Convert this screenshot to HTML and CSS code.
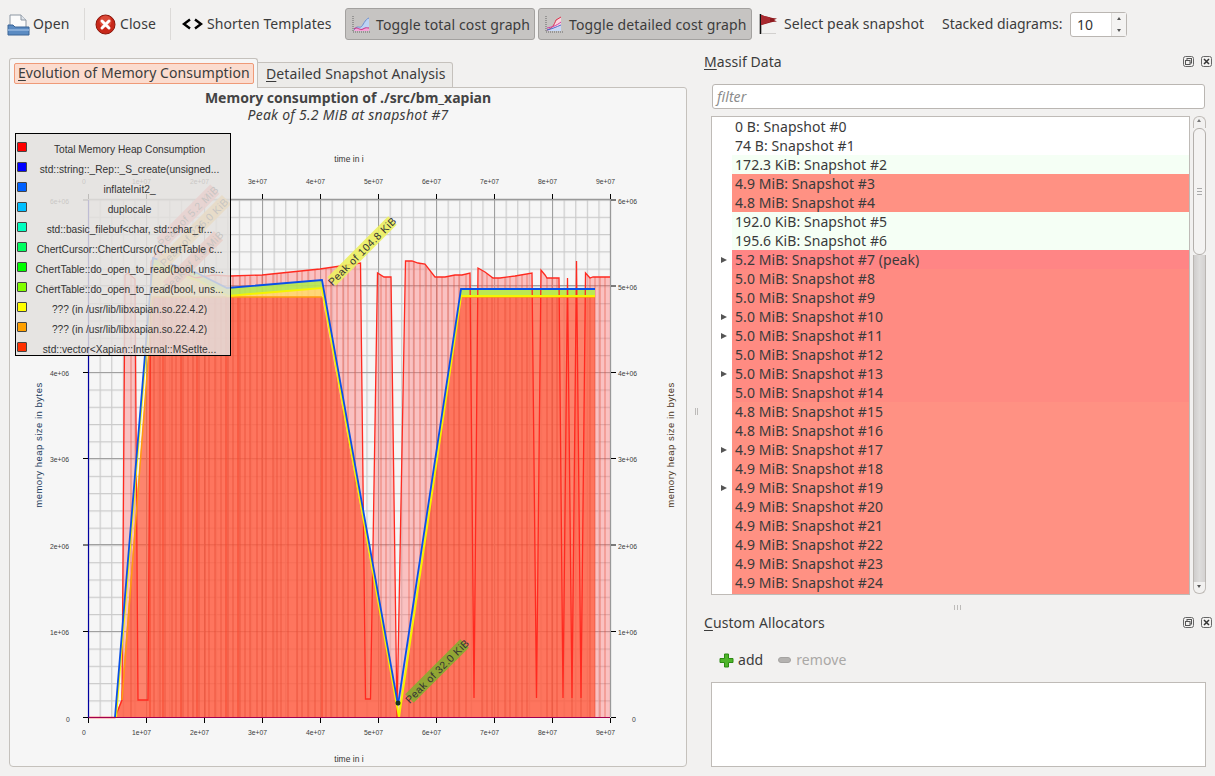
FILE: index.html
```html
<!DOCTYPE html>
<html lang="en">
<head>
<meta charset="utf-8">
<title>Massif Visualizer</title>
<link rel="stylesheet" href="styles.css">
</head>
<body>
<div class="toolbar">
  <div class="tool tool-open">
    <svg class="ico" width="23" height="23" viewBox="0 0 23 23"><path d="M3 2h11l5 5v8H3z" fill="#fbfbfb" stroke="#8d97a3"/><path d="M14 2v5h5" fill="#dfe4ea" stroke="#8d97a3"/><path d="M1 12h5l2 2h14v8H1z" fill="#5b8bc2" stroke="#3a6496"/><path d="M1 16h21v2H1z" fill="#86acd8"/></svg>
    <span>Open</span>
  </div>
  <div class="sep"></div>
  <div class="tool tool-close">
    <svg class="ico" width="21" height="21" viewBox="0 0 21 21"><circle cx="10.5" cy="10.5" r="9.5" fill="#c8281a" stroke="#8a1408"/><circle cx="10.5" cy="7.5" r="6" fill="#e8604c" opacity=".6"/><path d="M7 7l7 7M14 7l-7 7" stroke="#fff" stroke-width="3" stroke-linecap="round"/></svg>
    <span>Close</span>
  </div>
  <div class="sep"></div>
  <div class="tool tool-tpl">
    <svg class="ico" width="21" height="12" viewBox="0 0 21 12"><path d="M8 1.5L2 6l6 4.5M13 1.5L19 6l-6 4.5" fill="none" stroke="#000" stroke-width="2.4"/></svg>
    <span>Shorten Templates</span>
  </div>
  <div class="tool tool-check tool-total">
    <svg class="ico" width="20" height="20" viewBox="0 0 20 20"><path d="M3 17C6 11 8 14 10 13S14 5 18 4V17z" fill="#bcd3f4"/><path d="M3 17C6 12 9 16 12 15s3-1 6-1v3z" fill="#f6a5d8"/><path d="M3 16C6 11 8 14 10 13S14 5 18 4" fill="none" stroke="#6c8fd0"/><path d="M3 15c3-3 6 2 9 0s4-1 6-1" fill="none" stroke="#d0287c"/><path d="M2 2v16h17" fill="none" stroke="#666" stroke-dasharray="1 1"/></svg>
    <span>Toggle total cost graph</span>
  </div>
  <div class="tool tool-check tool-detail">
    <svg class="ico" width="20" height="20" viewBox="0 0 20 20"><path d="M3 17C8 16 10 12 12 7l5-4v14z" fill="#fbd3dc"/><path d="M3 17c5-1 9-3 14-5v5z" fill="#c7d9f8"/><path d="M3 16C8 15 10 11 12 6l5-3" fill="none" stroke="#e0304c"/><path d="M3 16c5-1 9-3 14-5" fill="none" stroke="#3f6fd8"/><path d="M3 14c5-1 9-2 14-6" fill="none" stroke="#d040a0"/><path d="M2 2v16h17" fill="none" stroke="#666" stroke-dasharray="1 1"/></svg>
    <span>Toggle detailed cost graph</span>
  </div>
  <div class="tool tool-flag">
    <svg class="ico" width="21" height="22" viewBox="0 0 21 22"><path d="M1.5 1v20" stroke="#111" stroke-width="1.6"/><path d="M2 2C7 3 11 5 18 5.500L15 7l3 1.500C11 9 7 11 2 12z" fill="#8e1a1e"/><path d="M2 2C6 3 8 4 11 4.500V9C8 9.500 6 11 2 12z" fill="#a92a30"/><path d="M3 20.500h14" stroke="#d2d0ce" stroke-width="1"/></svg>
    <span>Select peak snapshot</span>
  </div>
  <div class="tool tool-stack"><span>Stacked diagrams:</span></div>
  <div class="spin">
    <span class="spin-val">10</span>
    <span class="spin-btns"><i class="up"></i><i class="down"></i></span>
  </div>
</div>

<div class="main">
  <div class="left">
    <div class="tabs">
      <div class="tab tab-on"><span class="tab-focus"><u>E</u>volution of Memory Consumption</span></div>
      <div class="tab tab-off"><span><u>D</u>etailed Snapshot Analysis</span></div>
    </div>
    <div class="panel">
      <div class="titles">
        <div class="title">Memory consumption of ./src/bm_xapian</div>
        <div class="subtitle">Peak of 5.2 MiB at snapshot #7</div>
      </div>
      <svg class="chart" width="676" height="641" viewBox="10 125 676 641">
        <defs>
          <pattern id="gv" patternUnits="userSpaceOnUse" x="88" y="0" width="11.6" height="20"><rect width="1.2" height="20" fill="#cbcbcb"/></pattern>
          <pattern id="gh" patternUnits="userSpaceOnUse" x="0" y="199.5" width="20" height="17.27"><rect width="20" height="1.2" fill="#cbcbcb"/></pattern>
          <clipPath id="ct"><path d="M88 717.500H115L122 700L125 275L128 273L135 279L138 700H148L151 262L158 250L175 268L195 278L213 275L230 276L262 275L320 269L360.500 263L365.500 699H370.500L377.500 273L384 277L391 277L397 717L405.500 261L412 261L418 263L425 264L435 277L445 277L455 275L462 275L470 273L474 698L478 268L485 272L493 278L500 278L515 276L532 273L536.500 698L541 270L545 275L547 278L559 278L563 698L567.500 278L572 698L576.500 261L581 698L585.500 273L590 278L593 277L610 277V717.500z"/></clipPath>
        </defs>

        <g class="grid">
          <rect x="88" y="199.500" width="523" height="518" fill="url(#gv)"/>
          <rect x="88" y="199.500" width="523" height="518" fill="url(#gh)"/>
          <path class="major" d="M146.500 200V717M204.500 200V717M262.500 200V717M320.500 200V717M378.500 200V717M436.500 200V717M494.500 200V717M552.500 200V717M88 285.500H611M88 372.500H611M88 458.500H611M88 544.500H611M88 631.500H611"/>
          <path class="frame" d="M88 199.500H610.500V717"/>
        </g>

        <path class="total-fill" d="M88 717.500H115L122 700L125 275L128 273L135 279L138 700H148L151 262L158 250L175 268L195 278L213 275L230 276L262 275L320 269L360.500 263L365.500 699H370.500L377.500 273L384 277L391 277L397 717L405.500 261L412 261L418 263L425 264L435 277L445 277L455 275L462 275L470 273L474 698L478 268L485 272L493 278L500 278L515 276L532 273L536.500 698L541 270L545 275L547 278L559 278L563 698L567.500 278L572 698L576.500 261L581 698L585.500 273L590 278L593 277L610 277V717.500z"/>
        <path class="base-fill" d="M115 717.500L121 700L153 297H322L399 717.500L461 297H595V717.500z"/>
        <g clip-path="url(#ct)">
          <path class="stripes" d="M131 200V717M154 200V717M160 200V717M165 200V717M172 200V717M176 200V717M183 200V717M188 200V717M193 200V717M199 200V717M205 200V717M209 200V717M215 200V717M221 200V717M228 200V717M233 200V717M240 200V717M245 200V717M250 200V717M257 200V717M262 200V717M266 200V717M273 200V717M277 200V717M281 200V717M288 200V717M297 200V717M302 200V717M308 200V717M315 200V717M326 200V717M331 200V717M337 200V717M343 200V717M348 200V717M355 200V717M381 200V717M386 200V717M409 200V717M414 200V717M420 200V717M426 200V717M431 200V717M437 200V717M442 200V717M448 200V717M454 200V717M459 200V717M466 200V717M482 200V717M487 200V717M492 200V717M498 200V717M505 200V717M510 200V717M516 200V717M522 200V717M527 200V717M547 200V717M552 200V717M557 200V717M572 200V717M581 200V717M590 200V717M595 200V717M600 200V717M605 200V717"/>
        </g>
        <path class="orange-fill" d="M153 265L197 280L228 296L322 288V297H153zM461 289H595V297H461z"/>
        <path class="green-fill" d="M153 258L197 273L227 288L322 280V288L228 296L197 280L153 265zM461 289H595V296H461z"/>
        <path class="total-line" d="M88 717.500H115L122 700L125 275L128 273L135 279L138 700H148L151 262L158 250L175 268L195 278L213 275L230 276L262 275L320 269L360.500 263L365.500 699H370.500L377.500 273L384 277L391 277L397 717L405.500 261L412 261L418 263L425 264L435 277L445 277L455 275L462 275L470 273L474 698L478 268L485 272L493 278L500 278L515 276L532 273L536.500 698L541 270L545 275L547 278L559 278L563 698L567.500 278L572 698L576.500 261L581 698L585.500 273L590 278L593 277L610 277"/>
        <path class="inner-lines" d="M150 297V717M163 297V717M181 297V717M197 297V717M226 297V717M238 297V717M322 297V717"/>
        <path class="orange-line" d="M122 700L153 297H322M461 297H595"/>
        <path class="yellow-line" d="M116 717L153 265L197 280L228 296L322 288L399 717L461 296H595"/>
        <path class="blue-line" d="M115 717L153 258L197 273L227 288L322 280L398 705L461 289H595"/>
        <circle cx="398" cy="703" r="2.500" fill="#1a3020"/>
        <path class="axis-b" d="M88 717.500H610"/>
        <path class="axis-l" d="M88.500 200V717.500"/>
        <path class="ticks" d="M83 200H88M83 286H88M83 372.500H88M83 458.500H88M83 545H88M83 631.500H88M83 717.500H88M611 200H616M611 286H616M611 372.500H616M611 458.500H616M611 545H616M611 631.500H616M611 717.500H616M88.500 194V199M146.500 194V199M204.500 194V199M262.500 194V199M320.500 194V199M378.500 194V199M436.500 194V199M494.500 194V199M552.500 194V199M610.500 194V199M88.500 718V723M146.500 718V723M204.500 718V723M262.500 718V723M320.500 718V723M378.500 718V723M436.500 718V723M494.500 718V723M552.500 718V723M610.500 718V723"/>

        <g class="labels-x">
          <text x="82" y="184">0</text><text x="132" y="184">1e+07</text><text x="190" y="184">2e+07</text><text x="248" y="184">3e+07</text><text x="306" y="184">4e+07</text><text x="364" y="184">5e+07</text><text x="422" y="184">6e+07</text><text x="480" y="184">7e+07</text><text x="538" y="184">8e+07</text><text x="596" y="184">9e+07</text>
          <text x="82" y="735">0</text><text x="132" y="735">1e+07</text><text x="190" y="735">2e+07</text><text x="248" y="735">3e+07</text><text x="306" y="735">4e+07</text><text x="364" y="735">5e+07</text><text x="422" y="735">6e+07</text><text x="480" y="735">7e+07</text><text x="538" y="735">8e+07</text><text x="596" y="735">9e+07</text>
        </g>
        <g class="labels-y">
          <text x="50" y="204">6e+06</text><text x="50" y="290">5e+06</text><text x="50" y="376">4e+06</text><text x="50" y="462">3e+06</text><text x="50" y="549">2e+06</text><text x="50" y="635">1e+06</text><text x="66" y="722">0</text>
          <text x="618" y="204">6e+06</text><text x="618" y="290">5e+06</text><text x="618" y="376">4e+06</text><text x="618" y="462">3e+06</text><text x="618" y="549">2e+06</text><text x="618" y="635">1e+06</text><text x="632" y="722">0</text>
        </g>
        <text class="axis-title" x="349" y="162">time in i</text>
        <text class="axis-title" x="349" y="762">time in i</text>
        <text class="axis-title ytitle-l" transform="translate(42 445) rotate(-90)">memory heap size in bytes</text>
        <text class="axis-title ytitle-r" transform="translate(674 445) rotate(-90)">memory heap size in bytes</text>

        <g transform="translate(188 216) rotate(-45)"><rect class="p-bg" x="-38" y="-6.500" width="76" height="13" fill="#ff8a8a"/><text class="p-tx">Peak of 5.2 MiB</text></g>
        <g transform="translate(194 232) rotate(-45)"><rect class="p-bg" x="-46" y="-6.500" width="92" height="13" fill="#ffc050"/><text class="p-tx">Peak of 236.0 KiB</text></g>
        <g transform="translate(193 261) rotate(-45)"><rect class="p-bg" x="-36" y="-6.500" width="72" height="13" fill="#ff7a60"/><text class="p-tx">Peak of 4.8 MiB</text></g>
        <g transform="translate(362 251) rotate(-45)"><rect class="p-bg" x="-43" y="-6" width="86" height="12" fill="#ecf060"/><text class="p-tx">Peak of 104.8 KiB</text></g>
        <g transform="translate(437 671) rotate(-45)"><rect class="p-bg" x="-39" y="-6" width="78" height="12" fill="#86ac30"/><text class="p-tx">Peak of 32.0 KiB</text></g>
      </svg>

      <div class="legend">
        <div class="leg"><i class="sw c0"></i><span>Total Memory Heap Consumption</span></div>
        <div class="leg"><i class="sw c1"></i><span>std::string::_Rep::_S_create(unsigned...</span></div>
        <div class="leg"><i class="sw c2"></i><span>inflateInit2_</span></div>
        <div class="leg"><i class="sw c3"></i><span>duplocale</span></div>
        <div class="leg"><i class="sw c4"></i><span>std::basic_filebuf&lt;char, std::char_tr...</span></div>
        <div class="leg"><i class="sw c5"></i><span>ChertCursor::ChertCursor(ChertTable c...</span></div>
        <div class="leg"><i class="sw c6"></i><span>ChertTable::do_open_to_read(bool, uns...</span></div>
        <div class="leg"><i class="sw c7"></i><span>ChertTable::do_open_to_read(bool, uns...</span></div>
        <div class="leg"><i class="sw c8"></i><span>??? (in /usr/lib/libxapian.so.22.4.2)</span></div>
        <div class="leg"><i class="sw c9"></i><span>??? (in /usr/lib/libxapian.so.22.4.2)</span></div>
        <div class="leg"><i class="sw c10"></i><span>std::vector&lt;Xapian::Internal::MSetIte...</span></div>
      </div>
    </div>
  </div>

  <div class="vsplit"><i></i></div>

  <div class="right">
    <div class="dock-head">
      <span class="dock-label"><u>M</u>assif Data</span>
      <span class="dock-btns">
        <svg width="11" height="11" viewBox="0 0 11 11"><rect x=".5" y=".5" width="10" height="10" rx="2" fill="none" stroke="#666"/><rect x="4" y="2.500" width="4.500" height="4.500" fill="none" stroke="#555"/><rect x="2.500" y="4.500" width="4.500" height="4" fill="#f2f1f0" stroke="#555"/></svg>
        <svg width="11" height="11" viewBox="0 0 11 11"><rect x=".5" y=".5" width="10" height="10" rx="2" fill="none" stroke="#666"/><path d="M3 3l5 5M8 3l-5 5" stroke="#333" stroke-width="1.500"/></svg>
      </span>
    </div>
    <div class="filter">filter</div>
    <div class="tree-wrap">
      <div class="tree">
        <div class="row"><b class="gut"></b><span class="cell">0 B: Snapshot #0</span></div>
        <div class="row"><b class="gut"></b><span class="cell">74 B: Snapshot #1</span></div>
        <div class="row"><b class="gut"></b><span class="cell pale">172.3 KiB: Snapshot #2</span></div>
        <div class="row"><b class="gut"></b><span class="cell r49">4.9 MiB: Snapshot #3</span></div>
        <div class="row"><b class="gut"></b><span class="cell r49">4.8 MiB: Snapshot #4</span></div>
        <div class="row"><b class="gut"></b><span class="cell pale">192.0 KiB: Snapshot #5</span></div>
        <div class="row"><b class="gut"></b><span class="cell pale">195.6 KiB: Snapshot #6</span></div>
        <div class="row"><b class="gut arrow"></b><span class="cell r52">5.2 MiB: Snapshot #7 (peak)</span></div>
        <div class="row"><b class="gut"></b><span class="cell r50">5.0 MiB: Snapshot #8</span></div>
        <div class="row"><b class="gut"></b><span class="cell r50">5.0 MiB: Snapshot #9</span></div>
        <div class="row"><b class="gut arrow"></b><span class="cell r50">5.0 MiB: Snapshot #10</span></div>
        <div class="row"><b class="gut arrow"></b><span class="cell r50">5.0 MiB: Snapshot #11</span></div>
        <div class="row"><b class="gut"></b><span class="cell r50">5.0 MiB: Snapshot #12</span></div>
        <div class="row"><b class="gut arrow"></b><span class="cell r50">5.0 MiB: Snapshot #13</span></div>
        <div class="row"><b class="gut"></b><span class="cell r50">5.0 MiB: Snapshot #14</span></div>
        <div class="row"><b class="gut"></b><span class="cell r49">4.8 MiB: Snapshot #15</span></div>
        <div class="row"><b class="gut"></b><span class="cell r49">4.8 MiB: Snapshot #16</span></div>
        <div class="row"><b class="gut arrow"></b><span class="cell r49">4.9 MiB: Snapshot #17</span></div>
        <div class="row"><b class="gut"></b><span class="cell r49">4.9 MiB: Snapshot #18</span></div>
        <div class="row"><b class="gut arrow"></b><span class="cell r49">4.9 MiB: Snapshot #19</span></div>
        <div class="row"><b class="gut"></b><span class="cell r49">4.9 MiB: Snapshot #20</span></div>
        <div class="row"><b class="gut"></b><span class="cell r49">4.9 MiB: Snapshot #21</span></div>
        <div class="row"><b class="gut"></b><span class="cell r49">4.9 MiB: Snapshot #22</span></div>
        <div class="row"><b class="gut"></b><span class="cell r49">4.9 MiB: Snapshot #23</span></div>
        <div class="row row-last"><b class="gut"></b><span class="cell r49">4.9 MiB: Snapshot #24</span></div>
      </div>
      <div class="scroll">
        <div class="sb-btn sb-up"><i></i></div>
        <div class="sb-thumb"><i></i></div>
        <div class="sb-track"></div>
        <div class="sb-btn sb-down"><i></i></div>
      </div>
    </div>
    <div class="hsplit"><i></i></div>
    <div class="dock-head">
      <span class="dock-label"><u>C</u>ustom Allocators</span>
      <span class="dock-btns">
        <svg width="11" height="11" viewBox="0 0 11 11"><rect x=".5" y=".5" width="10" height="10" rx="2" fill="none" stroke="#666"/><rect x="4" y="2.500" width="4.500" height="4.500" fill="none" stroke="#555"/><rect x="2.500" y="4.500" width="4.500" height="4" fill="#f2f1f0" stroke="#555"/></svg>
        <svg width="11" height="11" viewBox="0 0 11 11"><rect x=".5" y=".5" width="10" height="10" rx="2" fill="none" stroke="#666"/><path d="M3 3l5 5M8 3l-5 5" stroke="#333" stroke-width="1.500"/></svg>
      </span>
    </div>
    <div class="alloc-bar">
      <svg class="plus" width="15" height="15" viewBox="0 0 15 15"><path d="M5.500 1h4v4.500H14v4H9.500V14h-4V9.500H1v-4h4.500z" fill="#4fb52a" stroke="#2c8a12" stroke-linejoin="round"/></svg>
      <span class="add">add</span>
      <svg class="minus" width="13" height="6" viewBox="0 0 13 6"><rect x=".5" y=".5" width="12" height="5" rx="2.500" fill="#b4b2b0" stroke="#a5a3a1"/></svg>
      <span class="remove">remove</span>
    </div>
    <div class="alloc-box"></div>
  </div>
</div>
</body>
</html>
```
FILE: styles.css
```css
* { box-sizing: border-box; }
html, body { margin: 0; padding: 0; }
body {
  width: 1215px;
  height: 776px;
  overflow: hidden;
  background: #f2f1f0;
  color: #3c3c3c;
  font: 14px/19px "Noto Sans", sans-serif;
  letter-spacing: .07px;
}
u { text-underline-offset: 2px; }

/* toolbar */
.toolbar { display: flex; align-items: center; height: 48px; padding: 0 0 0 7px; }
.tool { display: flex; align-items: center; gap: 3px; flex: none; height: 32px; }
.tool span { white-space: nowrap; margin-top: -2px; }
.ico { flex: none; }
.sep { flex: none; width: 1px; height: 32px; background: #dcdad8; }
.tool-open { width: 77px; }
.tool-close { width: 75px; margin-left: 10px; gap: 4px; }
.tool-tpl { width: 150px; margin-left: 11px; gap: 4px; }
.tool-check {
  background: #c6c4c2;
  border: 1px solid #a3a19f;
  border-radius: 3px;
  padding-left: 5px;
  gap: 5px;
}
.tool-check span { margin-top: 0; letter-spacing: .13px; }
.tool-total { width: 190px; margin-left: 13px; }
.tool-detail { width: 214px; margin-left: 3px; }
.tool-flag { width: 165px; margin-left: 7px; gap: 4px; }
.tool-stack { width: 128px; margin-left: 18px; letter-spacing: 0; }
.spin {
  display: flex;
  flex: none;
  justify-content: space-between;
  width: 57px;
  height: 25px;
  background: #fff;
  border: 1px solid #bab6b2;
  border-radius: 3px;
  padding-left: 6px;
  line-height: 23px;
  color: #333;
}
.spin-btns { display: flex; flex-direction: column; width: 15px; background: #f4f3f2; border-left: 1px solid #dedcda; }
.spin-btns i { flex: 1; position: relative; }
.up::after, .down::after {
  content: "";
  position: absolute;
  left: 5px;
  border: 2.500px solid transparent;
}
.up::after { top: 2px; border-bottom: 3px solid #555; }
.down::after { top: 5px; border-top: 3px solid #555; }

/* left */
.main { display: flex; height: 728px; }
.left { width: 693px; flex: none; padding: 10px 0 0 9px; }
.tabs { display: flex; align-items: flex-end; height: 30px; position: relative; z-index: 1; }
.tab { white-space: nowrap; }
.tab-on {
  width: 249px;
  height: 30px;
  background: #f6f6f6;
  border: 1px solid #c5c1bc;
  border-bottom: 0;
  border-radius: 3px 3px 0 0;
  padding: 4px 3px 0 4px;
}
.tab-focus {
  display: block;
  height: 21px;
  line-height: 17px;
  background: #fbdccf;
  border: 1px solid #ef9a78;
  border-radius: 2px;
  padding-left: 3px;
  letter-spacing: .07px;
}
.tab-off {
  width: 195px;
  height: 26px;
  background: #ecebe9;
  border: 1px solid #c5c1bc;
  border-left: 0;
  border-radius: 0 3px 0 0;
  padding: 1px 0 0 8px;
  letter-spacing: .1px;
}
.panel {
  position: relative;
  width: 678px;
  height: 680px;
  margin-top: -1px;
  background: #f6f6f6;
  border: 1px solid #c5c1bc;
  border-radius: 0 3px 4px 4px;
}
.titles { height: 37px; text-align: center; }
.title { font-weight: 700; line-height: 19px; color: #444; letter-spacing: 0; }
.subtitle { font-style: italic; line-height: 16px; letter-spacing: .27px; }
.chart { display: block; letter-spacing: 0; }

/* chart */
.chart .major { stroke: #a0a0a0; stroke-width: 1; fill: none; }
.chart .frame { stroke: #999; stroke-width: 1.300; fill: none; }
.total-fill { fill: rgba(255, 120, 120, .42); }
.stripes { stroke: rgba(225, 60, 40, .26); stroke-width: 2; fill: none; }
.base-fill { fill: rgba(255, 88, 55, .72); }
.orange-fill { fill: #ffd96a; opacity: .85; }
.green-fill { fill: #b4ea50; opacity: .9; }
.total-line { stroke: #ff2a20; stroke-width: 1.300; fill: none; }
.inner-lines { stroke: #f5442a; stroke-width: 1; fill: none; }
.orange-line { stroke: #ff9a10; stroke-width: 1.500; fill: none; }
.yellow-line { stroke: #f4f400; stroke-width: 2; fill: none; }
.blue-line { stroke: #0a50e8; stroke-width: 1.800; fill: none; }
.axis-b { stroke: #a00050; stroke-width: 1.200; fill: none; }
.axis-l { stroke: #0000a0; stroke-width: 1.200; fill: none; }
.ticks { stroke: #000; stroke-width: 1; fill: none; }
.labels-x text, .labels-y text { font: 6.800px "Liberation Sans", sans-serif; fill: #3c3c3c; }
.axis-title { font: 8.500px "Liberation Sans", sans-serif; fill: #333; text-anchor: middle; }
.ytitle-l { fill: #203a5c; font-size: 9.500px; letter-spacing: .5px; }
.ytitle-r { fill: #4a3420; font-size: 9.500px; letter-spacing: .5px; }
.p-bg { opacity: .9; }
.p-tx { font: 10.500px "Liberation Sans", sans-serif; letter-spacing: .45px; fill: #333; text-anchor: middle; dominant-baseline: central; }

/* legend */
.legend {
  position: absolute;
  left: 5px;
  top: 45px;
  width: 216px;
  height: 223px;
  padding-top: 6px;
  background: rgba(226, 224, 222, .84);
  border: 1px solid #000;
  letter-spacing: 0;
}
.leg { position: relative; height: 20px; text-align: center; font: 10.200px/20px "Liberation Sans", sans-serif; color: #333; white-space: nowrap; padding-left: 13px; }
.sw { position: absolute; left: 1px; top: 2px; width: 10px; height: 10px; border: 1px solid #444; border-radius: 1px; }
.c0 { background: #f00; } .c1 { background: #00f; } .c2 { background: #0060ff; }
.c3 { background: #00bfff; } .c4 { background: #00ffc0; } .c5 { background: #00ff60; }
.c6 { background: #0f0; } .c7 { background: #80ff00; } .c8 { background: #ff0; }
.c9 { background: #ffa000; } .c10 { background: #ff3000; }

/* splitters */
.vsplit { width: 7px; flex: none; display: flex; align-items: center; justify-content: center; }
.vsplit i { width: 3px; height: 7px; margin-top: -2px; border-left: 1px solid #bdbbb9; border-right: 1px solid #bdbbb9; }
.hsplit { height: 11px; display: flex; align-items: center; justify-content: center; padding-right: 8px; margin-top: 7px; width: 515px; }
.hsplit i { width: 7px; height: 5px; border-left: 1px solid #bdbbb9; border-right: 1px solid #bdbbb9; background: linear-gradient(90deg, transparent 2px, #bdbbb9 2px, #bdbbb9 3px, transparent 3px); }

/* right */
.right { flex: 1; padding: 4px 0 0 4px; min-width: 0; }
.dock-head { display: flex; justify-content: space-between; align-items: center; height: 20px; padding-right: 3px; }
.dock-label { margin-top: -2px; }
.dock-btns { display: flex; gap: 7px; margin-top: -1px; }
.dock-btns svg { display: block; }
.filter {
  width: 493px;
  height: 25px;
  margin: 12px 0 0 8px;
  padding-left: 4px;
  background: #fff;
  border: 1px solid #bab6b2;
  border-radius: 3px;
  font-style: italic;
  line-height: 23px;
  color: #8c8c8c;
}
.tree-wrap { display: flex; gap: 3px; margin: 7px 0 0 7px; height: 479px; }
.tree { width: 479px; height: 479px; overflow: hidden; background: #fff; border: 1px solid #bfbbb7; }
.row { display: flex; height: 19px; }
.row-last { height: 21px; }
.gut { flex: none; width: 20px; position: relative; }
.arrow::after {
  content: "";
  position: absolute;
  left: 9px;
  top: 7px;
  border-left: 6px solid #555;
  border-top: 3.500px solid transparent;
  border-bottom: 3.500px solid transparent;
}
.cell { flex: 1; padding-left: 3px; color: #3a3a3a; white-space: nowrap; }
.pale { background: #f5fff5; }
.r49 { background: #ff9183; }
.r50 { background: #ff8b82; }
.r52 { background: #ff8585; }
.scroll { display: flex; flex-direction: column; width: 13px; height: 478px; }
.sb-btn { height: 12px; background: #f2f1f0; border: 1px solid #c0bcb8; position: relative; flex: none; }
.sb-up { border-radius: 6px 6px 0 0; border-bottom: 0; }
.sb-down { border-radius: 0 0 6px 6px; border-top: 0; }
.sb-btn i { position: absolute; left: 3px; border: 2.500px solid transparent; }
.sb-up i { top: 0; border-bottom: 3px solid #777; }
.sb-down i { top: 3px; border-top: 3px solid #555; }
.sb-thumb {
  flex: none;
  height: 127px;
  display: flex;
  align-items: center;
  justify-content: center;
  background: #f4f3f2;
  border: 1px solid #b4b0ac;
  border-radius: 6px;
}
.sb-thumb i { width: 5px; height: 7px; border-top: 1px solid #aaa; border-bottom: 1px solid #aaa; background: linear-gradient(#aaa, #aaa) center / 100% 1px no-repeat; }
.sb-track { flex: 1; background: linear-gradient(90deg, #cfcdcc, #dedddc 50%, #d4d2d1); border-left: 1px solid #bab6b2; border-right: 1px solid #bab6b2; }
.alloc-bar { display: flex; align-items: center; height: 24px; margin: 14px 0 0 15px; gap: 4px; }
.plus { margin-top: 2px; }
.add { color: #3c3c3c; }
.minus { margin: 2px 1px 0 11px; }
.remove { color: #aaa8a6; }
.alloc-box { width: 495px; height: 85px; margin: 11px 0 0 7px; background: #fff; border: 1px solid #bfbbb7; }
```
